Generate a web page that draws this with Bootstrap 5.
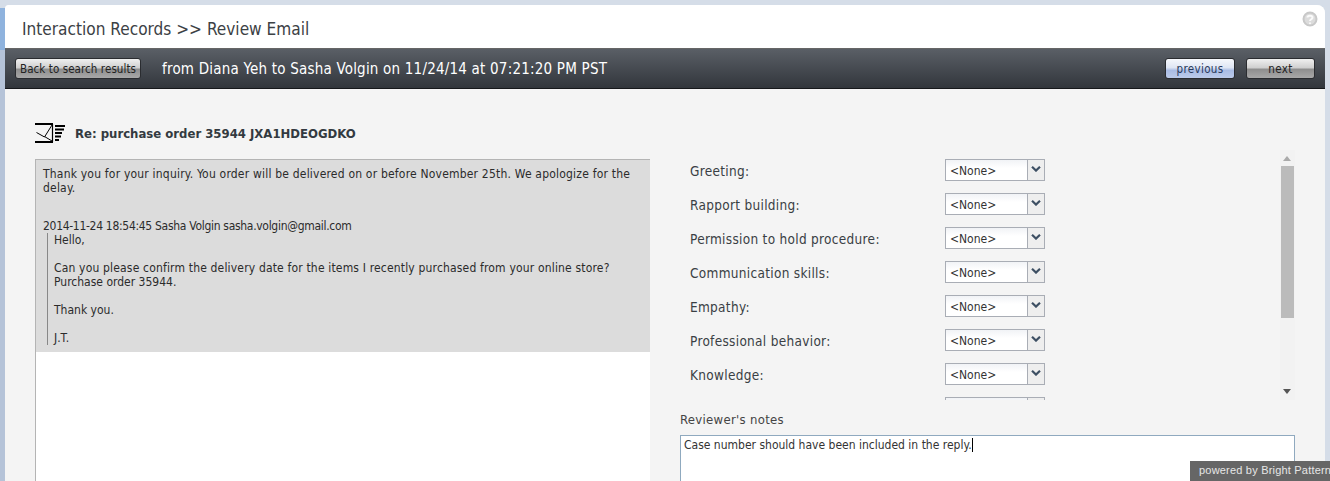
<!DOCTYPE html>
<html lang="en">
<head>
<meta charset="UTF-8">
<title>Interaction Records - Review Email</title>
<link href="https://cdn.jsdelivr.net/npm/bootstrap@5.3.0/dist/css/bootstrap.min.css" rel="stylesheet">
<style>
html, body { height: 481px; overflow: hidden; }
body { background: #d5dde8; font-family: "DejaVu Sans Condensed", "DejaVu Sans", sans-serif; color: #333; position: relative; }
.side-strip { width: 5px; height: 481px; background: linear-gradient(#d5dde8 0 8px, #8fb3de 8px 50px, #b5c3d8 50px); }
.app-panel { width: 1320px; height: 476px; margin-top: 5px; background: #f4f4f4; border-top-right-radius: 8px; border-top-left-radius: 4px; overflow: hidden; }
.page-head { height: 43px; background: #fff; padding: 12px 0 0 17px; font-size: 17.1px; line-height: 24px; color: #3c4145; }
.help-mark { width: 16px; height: 16px; top: 6px; right: 7px; }
.tool-bar { height: 41px; background: linear-gradient(#5a5f66, #32363c); border-top: 1px solid #666; border-bottom: 1px solid #16181b; padding: 0 10px; color: #fff; }
.tool-title { font-size: 15px; margin: 1px 0 0 21px; letter-spacing: .21px; }
.bar-btn { height: 21px; padding: 1px 0 0; font-size: 11.5px; line-height: 19px; color: #222; border: 1px solid #2a2c30; border-radius: 3px; background: linear-gradient(#f0f0f0 0, #d0d0d0 45%, #8f8f8f 55%, #a8a8a8 100%); letter-spacing: .35px; }
.bar-btn.is-back { width: 126px; letter-spacing: .08px; }
.bar-btn.is-blue { background: linear-gradient(#f6f8fc 0, #dfe6f4 45%, #a9bce4 60%, #bccbea 100%); color: #2a3a5c; width: 70px; }
.bar-btn.is-grey { width: 69px; margin-left: 11px; }
.work-area { padding: 0 30px; }
.subject-row { height: 70px; padding-top: 35px; font-size: 13px; font-weight: 700; color: #333a40; }
.subject-row svg { margin: -1px 10px 0 0; }
.mail-col { width: 615px; height: 330px; background: #fff; border-left: 1px solid #b4b4b4; border-top: 1px solid #b4b4b4; font-size: 12px; line-height: 14px; color: #2b2b2b; }
.mail-text { background: #dcdcdc; padding: 7px 0 7px 7px; height: 192px; }
.mail-reply { margin-bottom: 24px; letter-spacing: .2px; }
.mail-stamp { letter-spacing: -.3px; white-space: nowrap; }
.mail-long { letter-spacing: .17px; }
.mail-quote { border-left: 1px solid #888; margin-left: 4px; padding-left: 6px; }
.review-col { width: 615px; margin-left: 30px; }
.score-scroll { height: 250px; margin-top: -9px; padding-left: 10px; overflow: hidden; }
.score-list { padding-top: 9px; width: 590px; }
.score-row { height: 34px; font-size: 13.5px; line-height: 20px; letter-spacing: .3px; color: #3a3f44; }
.score-name { width: 255px; padding-top: 2px; }
.fake-select { width: 100px; height: 22px; background: linear-gradient(#f1f3f6, #fff 40%); border: 1px solid #a9adb5; font-size: 12px; line-height: 21px; letter-spacing: 0; color: #333; }
.sel-val { width: 82px; padding: 1px 0 0 4px; }
.sel-arrow { width: 17px; background: #eee; border-left: 1px solid #a9adb5; }
.sel-arrow svg { display: block; margin: 6px auto 0; }
.fake-scrollbar { width: 15px; height: 250px; top: 0; right: 0; background: #f2f2f2; }
.scroll-thumb { width: 13px; height: 152px; top: 16px; left: 1px; background: #bbb; }
.arrow-up, .arrow-down { left: 3px; width: 0; height: 0; border-left: 4px solid transparent; border-right: 4px solid transparent; }
.arrow-up { top: 6px; border-bottom: 5px solid #aaa; }
.arrow-down { top: 239px; border-top: 5px solid #555; }
.notes-label { font-size: 13px; line-height: 16px; margin-top: 12px; color: #444; letter-spacing: .3px; }
.notes-box { height: 60px; margin-top: 7px; background: #fff; border: 1px solid #8fa9bf; padding: 2px 3px; font-size: 12px; line-height: 14px; color: #333; }
.text-caret { display: inline-block; width: 1px; height: 14px; background: #000; vertical-align: top; }
.powered-tag { right: 0; bottom: 0; width: 140px; height: 20px; background: #666; color: #e6e6e6; font-family: "Liberation Sans", sans-serif; font-size: 11px; letter-spacing: .2px; line-height: 19px; padding-left: 9px; white-space: nowrap; }
</style>
</head>
<body>
<div class="d-flex">
  <div class="side-strip"></div>
  <div class="app-panel">
    <div class="page-head position-relative">
      Interaction Records &gt;&gt; Review Email
      <svg class="help-mark position-absolute" viewBox="0 0 16 16"><circle cx="8" cy="8" r="6.5" fill="#dcdcdc" stroke="#c8c8c8" stroke-width="2"/><path d="M5.5 6.5C5.5 4 10.5 4 10.5 6.5C10.5 8.5 8 8 8 10" fill="none" stroke="#fafafa" stroke-width="2"/><circle cx="8" cy="12.2" r="1" fill="#fafafa"/></svg>
    </div>
    <div class="tool-bar d-flex align-items-center">
      <button class="bar-btn is-back">Back to search results</button>
      <span class="tool-title">from Diana Yeh to Sasha Volgin on 11/24/14 at 07:21:20 PM PST</span>
      <button class="bar-btn is-blue ms-auto">previous</button>
      <button class="bar-btn is-grey">next</button>
    </div>
    <div class="work-area">
      <div class="subject-row d-flex align-items-start">
        <svg width="30" height="20" viewBox="0 0 30 20"><g fill="none" stroke="#000"><path d="M0 1H18M0 19H18" stroke-width="2"/><path d="M17.5 1V19" stroke-width="1.2"/><path d="M17 2L9.5 14L1.5 9.5M9.5 13.5L17 18" stroke-width="1"/></g><path d="M20 2h10v2h-10zM20 5.5h9v2h-9zM20 9h7v2h-7zM20 12.5h6v2h-6zM20 16h4v2h-4z" fill="#000"/></svg>
        <span>Re: purchase order 35944 JXA1HDEOGDKO</span>
      </div>
      <div class="d-flex">
        <div class="mail-col flex-shrink-0">
          <div class="mail-text">
            <div class="mail-reply">Thank you for your inquiry. You order will be delivered on or before November 25th. We apologize for the delay.</div>
            <div class="mail-stamp">2014-11-24 18:54:45 Sasha Volgin sasha.volgin@gmail.com</div>
            <div class="mail-quote">
              Hello,<br><br>
              <span class="mail-long">Can you please confirm the delivery date for the items I recently purchased from your online store?</span><br>
              Purchase order 35944.<br><br>
              Thank you.<br><br>
              J.T.
            </div>
          </div>
        </div>
        <div class="review-col flex-shrink-0">
          <div class="score-scroll position-relative">
            <div class="score-list" id="scoreList"></div>
            <div class="fake-scrollbar position-absolute">
              <div class="arrow-up position-absolute"></div>
              <div class="scroll-thumb position-absolute"></div>
              <div class="arrow-down position-absolute"></div>
            </div>
          </div>
          <div class="notes-label">Reviewer's notes</div>
          <div class="notes-box">Case number should have been included in the reply.<span class="text-caret"></span></div>
        </div>
      </div>
    </div>
  </div>
</div>
<div class="powered-tag position-absolute">powered by Bright Pattern</div>
<script>
// last row is cut off by the scroll box, only the top of its select shows
const names = ['Greeting:', 'Rapport building:', 'Permission to hold procedure:', 'Communication skills:', 'Empathy:', 'Professional behavior:', 'Knowledge:', ''];
document.getElementById('scoreList').innerHTML = names.map(n => `
  <div class="score-row d-flex align-items-start">
    <span class="score-name">${n}</span>
    <div class="fake-select d-flex">
      <div class="sel-val">${n ? '&lt;None&gt;' : ''}</div>
      <div class="sel-arrow text-center">${n ? '<svg width="10" height="6" viewBox="0 0 10 6"><path d="M1 .8L5 4.6L9 .8" fill="none" stroke="#3d4f63" stroke-width="2.2"/></svg>' : ''}</div>
    </div>
  </div>`).join('');
</script>
</body>
</html>
